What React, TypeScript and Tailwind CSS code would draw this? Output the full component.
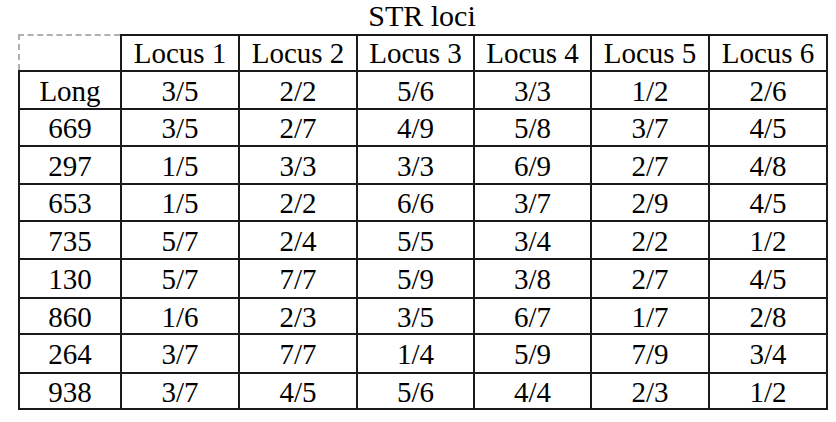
const header = ["Locus 1", "Locus 2", "Locus 3", "Locus 4", "Locus 5", "Locus 6"];

const rows: { name: string; values: string[]; h: string }[] = [
  { name: "Long", values: ["3/5", "2/2", "5/6", "3/3", "1/2", "2/6"], h: "h-[38px]" },
  { name: "669", values: ["3/5", "2/7", "4/9", "5/8", "3/7", "4/5"], h: "h-[37px]" },
  { name: "297", values: ["1/5", "3/3", "3/3", "6/9", "2/7", "4/8"], h: "h-[38px]" },
  { name: "653", values: ["1/5", "2/2", "6/6", "3/7", "2/9", "4/5"], h: "h-[37px]" },
  { name: "735", values: ["5/7", "2/4", "5/5", "3/4", "2/2", "1/2"], h: "h-[38px]" },
  { name: "130", values: ["5/7", "7/7", "5/9", "3/8", "2/7", "4/5"], h: "h-[39px]" },
  { name: "860", values: ["1/6", "2/3", "3/5", "6/7", "1/7", "2/8"], h: "h-[36px]" },
  { name: "264", values: ["3/7", "7/7", "1/4", "5/9", "7/9", "3/4"], h: "h-[39px]" },
  { name: "938", values: ["3/7", "4/5", "5/6", "4/4", "2/3", "1/2"], h: "h-[36px]" },
];

const widths = ["w-[102px]", "w-[118px]", "w-[118px]", "w-[117px]", "w-[117px]", "w-[118px]", "w-[118px]"];

export default function App() {
  return (
    <div
      className="w-[836px] h-[422px] bg-white text-black pl-[18px]"
      style={{ fontFamily: '"Liberation Serif", "Times New Roman", serif' }}
    >
      <div className="w-[808px] text-center text-[30px] leading-[31px] pb-[3px]">STR loci</div>
      <table className="table-fixed border-collapse w-[808px] text-[29px] leading-[32px]">
        <colgroup>
          {widths.map((w, i) => (
            <col key={i} className={w} />
          ))}
        </colgroup>
        <tbody>
          <tr className="h-[36px]">
            <td
              className="border-2 border-t-[#b0b0b0] border-l-[#b0b0b0] border-r-[#1a1a1a] border-b-[#1a1a1a] p-0"
              style={{ borderTopStyle: "dashed", borderLeftStyle: "dashed" }}
            />
            {header.map((h) => (
              <td key={h} className="border-2 border-[#1a1a1a] text-center p-0 align-middle">
                {h}
              </td>
            ))}
          </tr>
          {rows.map((r) => (
            <tr key={r.name} className={r.h}>
              <td className="border-2 border-[#1a1a1a] text-center p-0 pt-[1px] align-middle">{r.name}</td>
              {r.values.map((v, i) => (
                <td key={i} className="border-2 border-[#1a1a1a] text-center p-0 pt-[1px] align-middle">
                  {v}
                </td>
              ))}
            </tr>
          ))}
        </tbody>
      </table>
    </div>
  );
}
